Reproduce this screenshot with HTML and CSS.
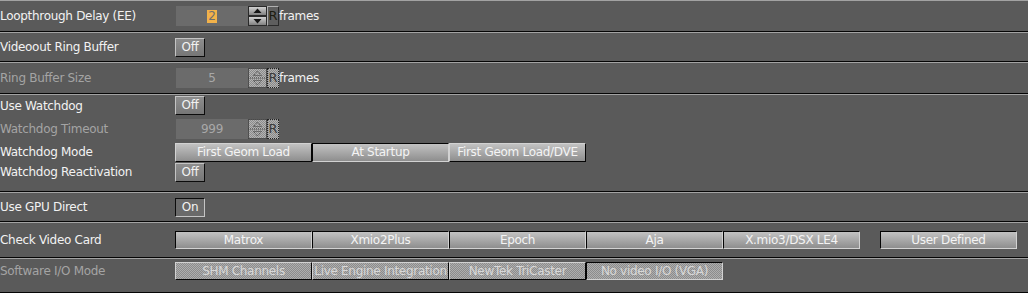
FILE: index.html
```html
<!DOCTYPE html>
<html lang="en">
<head>
    <meta charset="UTF-8">
    <title>Video Board Settings</title>
    <link rel="stylesheet" href="styles.css">
</head>
<body>
    <svg class="defs" width="0" height="0">
        <defs>
            <linearGradient id="sg" x1="0" y1="0" x2="0" y2="1">
                <stop offset="0" stop-color="#d4d4d4"/>
                <stop offset="1" stop-color="#7c7c7c"/>
            </linearGradient>
            <pattern id="ck" width="2" height="2" patternUnits="userSpaceOnUse">
                <rect width="2" height="2" fill="#8c8c8c"/>
                <rect width="1" height="1" fill="#b4b4b4"/>
                <rect x="1" y="1" width="1" height="1" fill="#b4b4b4"/>
            </pattern>
        </defs>
    </svg>

    <div class="panel">
        <div class="block b1">
            <div class="row">
                <span class="label">Loopthrough Delay (EE)</span>
                <div class="field"><span class="sel">2</span></div>
                <svg class="spin" width="19" height="20" viewBox="0 0 19 20">
                    <rect x="0.5" y="0.5" width="18" height="9" fill="url(#sg)" stroke="#2a2a2a"/>
                    <rect x="0.5" y="10.5" width="18" height="9" fill="url(#sg)" stroke="#2a2a2a"/>
                    <path d="M5.5 7h8l-4-4.5z" fill="#151515"/>
                    <path d="M5.5 13h8l-4 4.5z" fill="#151515"/>
                </svg>
                <span class="rbox">R</span>
                <span class="unit">frames</span>
            </div>
        </div>

        <div class="block b2">
            <div class="row">
                <span class="label">Videoout Ring Buffer</span>
                <span class="tog">Off</span>
            </div>
        </div>

        <div class="block b3">
            <div class="row dim">
                <span class="label">Ring Buffer Size</span>
                <div class="field">5</div>
                <svg class="spin" width="19" height="20" viewBox="0 0 19 20">
                    <rect x="0.5" y="0.5" width="18" height="19" fill="url(#ck)" stroke="#222" stroke-dasharray="1 1"/>
                    <line x1="0" y1="10" x2="19" y2="10" stroke="#3a3a3a" stroke-dasharray="1 1"/>
                    <path d="M5.5 7.5h8l-4-4.5z" fill="none" stroke="#3a3a3a" stroke-dasharray="1 1"/>
                    <path d="M5.5 12.5h8l-4 4.5z" fill="none" stroke="#3a3a3a" stroke-dasharray="1 1"/>
                </svg>
                <span class="rbox na">R</span>
                <span class="unit">frames</span>
            </div>
        </div>

        <div class="block b4">
            <div class="row r1">
                <span class="label">Use Watchdog</span>
                <span class="tog">Off</span>
            </div>
            <div class="row r2 dim">
                <span class="label">Watchdog Timeout</span>
                <div class="field">999</div>
                <svg class="spin" width="19" height="20" viewBox="0 0 19 20">
                    <rect x="0.5" y="0.5" width="18" height="19" fill="url(#ck)" stroke="#222" stroke-dasharray="1 1"/>
                    <line x1="0" y1="10" x2="19" y2="10" stroke="#3a3a3a" stroke-dasharray="1 1"/>
                    <path d="M5.5 7.5h8l-4-4.5z" fill="none" stroke="#3a3a3a" stroke-dasharray="1 1"/>
                    <path d="M5.5 12.5h8l-4 4.5z" fill="none" stroke="#3a3a3a" stroke-dasharray="1 1"/>
                </svg>
                <span class="rbox na">R</span>
            </div>
            <div class="row r3">
                <span class="label">Watchdog Mode</span>
                <div class="seg">
                    <span class="btn">First Geom Load</span>
                    <span class="btn down">At Startup</span>
                    <span class="btn">First Geom Load/DVE</span>
                </div>
            </div>
            <div class="row r4">
                <span class="label">Watchdog Reactivation</span>
                <span class="tog">Off</span>
            </div>
        </div>

        <div class="block b5">
            <div class="row">
                <span class="label">Use GPU Direct</span>
                <span class="tog on">On</span>
            </div>
        </div>

        <div class="block b6">
            <div class="row">
                <span class="label">Check Video Card</span>
                <div class="seg">
                    <span class="btn down">Matrox</span>
                    <span class="btn down">Xmio2Plus</span>
                    <span class="btn down">Epoch</span>
                    <span class="btn down">Aja</span>
                    <span class="btn down">X.mio3/DSX LE4</span>
                    <span class="btn down apart">User Defined</span>
                </div>
            </div>
        </div>

        <div class="block b7">
            <div class="row dim">
                <span class="label">Software I/O Mode</span>
                <div class="seg">
                    <span class="btn na">SHM Channels</span>
                    <span class="btn na">Live Engine Integration</span>
                    <span class="btn na">NewTek TriCaster</span>
                    <span class="btn na down">No video I/O (VGA)</span>
                </div>
            </div>
        </div>
    </div>
</body>
</html>
```

FILE: styles.css
```css
* { margin: 0; padding: 0; box-sizing: border-box; }
body { background-color: #5a5a5a; color: #f2f2f2; font-family: "DejaVu Sans", "Liberation Sans", sans-serif; font-size: 12px; letter-spacing: -0.3px; width: 1028px; height: 293px; overflow: hidden; }
.defs { position: absolute; }

.block { border-top: 1px solid #a2a2a2; border-bottom: 1px solid #050505; }
.row { display: flex; align-items: center; white-space: nowrap; }
.label { width: 175px; flex: none; }
.dim .label { color: #a4a4a4; }

.b1 .row, .b3 .row { height: 30px; }
.b2 .row, .b5 .row { height: 28px; }
.b4 { padding-bottom: 9px; }
.b4 .r1 { height: 21px; }
.b4 .r2 { height: 26px; }
.b4 .r3, .b4 .r4 { height: 20px; }
.b6 .row { height: 34px; }
.b7 { padding: 3px 0 12px; }
.b7 .row { height: 18px; }

.field { width: 72px; height: 20px; margin-left: 1px; background-color: #6b6b6b; display: flex; justify-content: center; align-items: center; color: #a8a8a8; }
.sel { background-color: #f2b24a; color: #6e6e6e; line-height: 13px; padding: 0 1px; }
.spin { display: block; flex: none; }
.rbox { width: 12px; height: 20px; border: 1px solid; border-color: #b0b0b0 #2a2a2a #2a2a2a #b0b0b0; background-color: #5e5e5e; color: #1c1c10; font-size: 13px; letter-spacing: 0; line-height: 18px; text-align: center; }
.rbox.na { background: repeating-conic-gradient(#b0b0b0 0 25%, #8a8a8a 0 50%) 0 0 / 2px 2px; border: 1px dotted #222; color: #3c3c3c; }
.unit { color: #f2f2f2; }

.tog { width: 30px; height: 19px; border: 1px solid; border-color: #c4c4c4 #0c0c0c #0c0c0c #c4c4c4; background: linear-gradient(#8e8e8e, #767676); text-align: center; line-height: 17px; }
.tog.on { border-color: #0c0c0c #c4c4c4 #c4c4c4 #0c0c0c; background: #6a6a6a; }

.seg { display: flex; }
.btn { width: 137px; height: 19px; border: 1px solid; border-color: #d2d2d2 #050505 #050505 #d2d2d2; background: linear-gradient(#c2c2c2, #8e8e8e); color: #f4f4f4; text-align: center; line-height: 17px; }
.btn.down { border-color: #050505 #d2d2d2 #d2d2d2 #050505; }
.b6 .btn, .b7 .btn { height: 18px; line-height: 16px; }
.btn.apart { margin-left: 20px; }
.btn.na { background: repeating-conic-gradient(#aeaeae 0 25%, #8c8c8c 0 50%) 0 0 / 2px 2px; color: #d8d8d8; }
```
